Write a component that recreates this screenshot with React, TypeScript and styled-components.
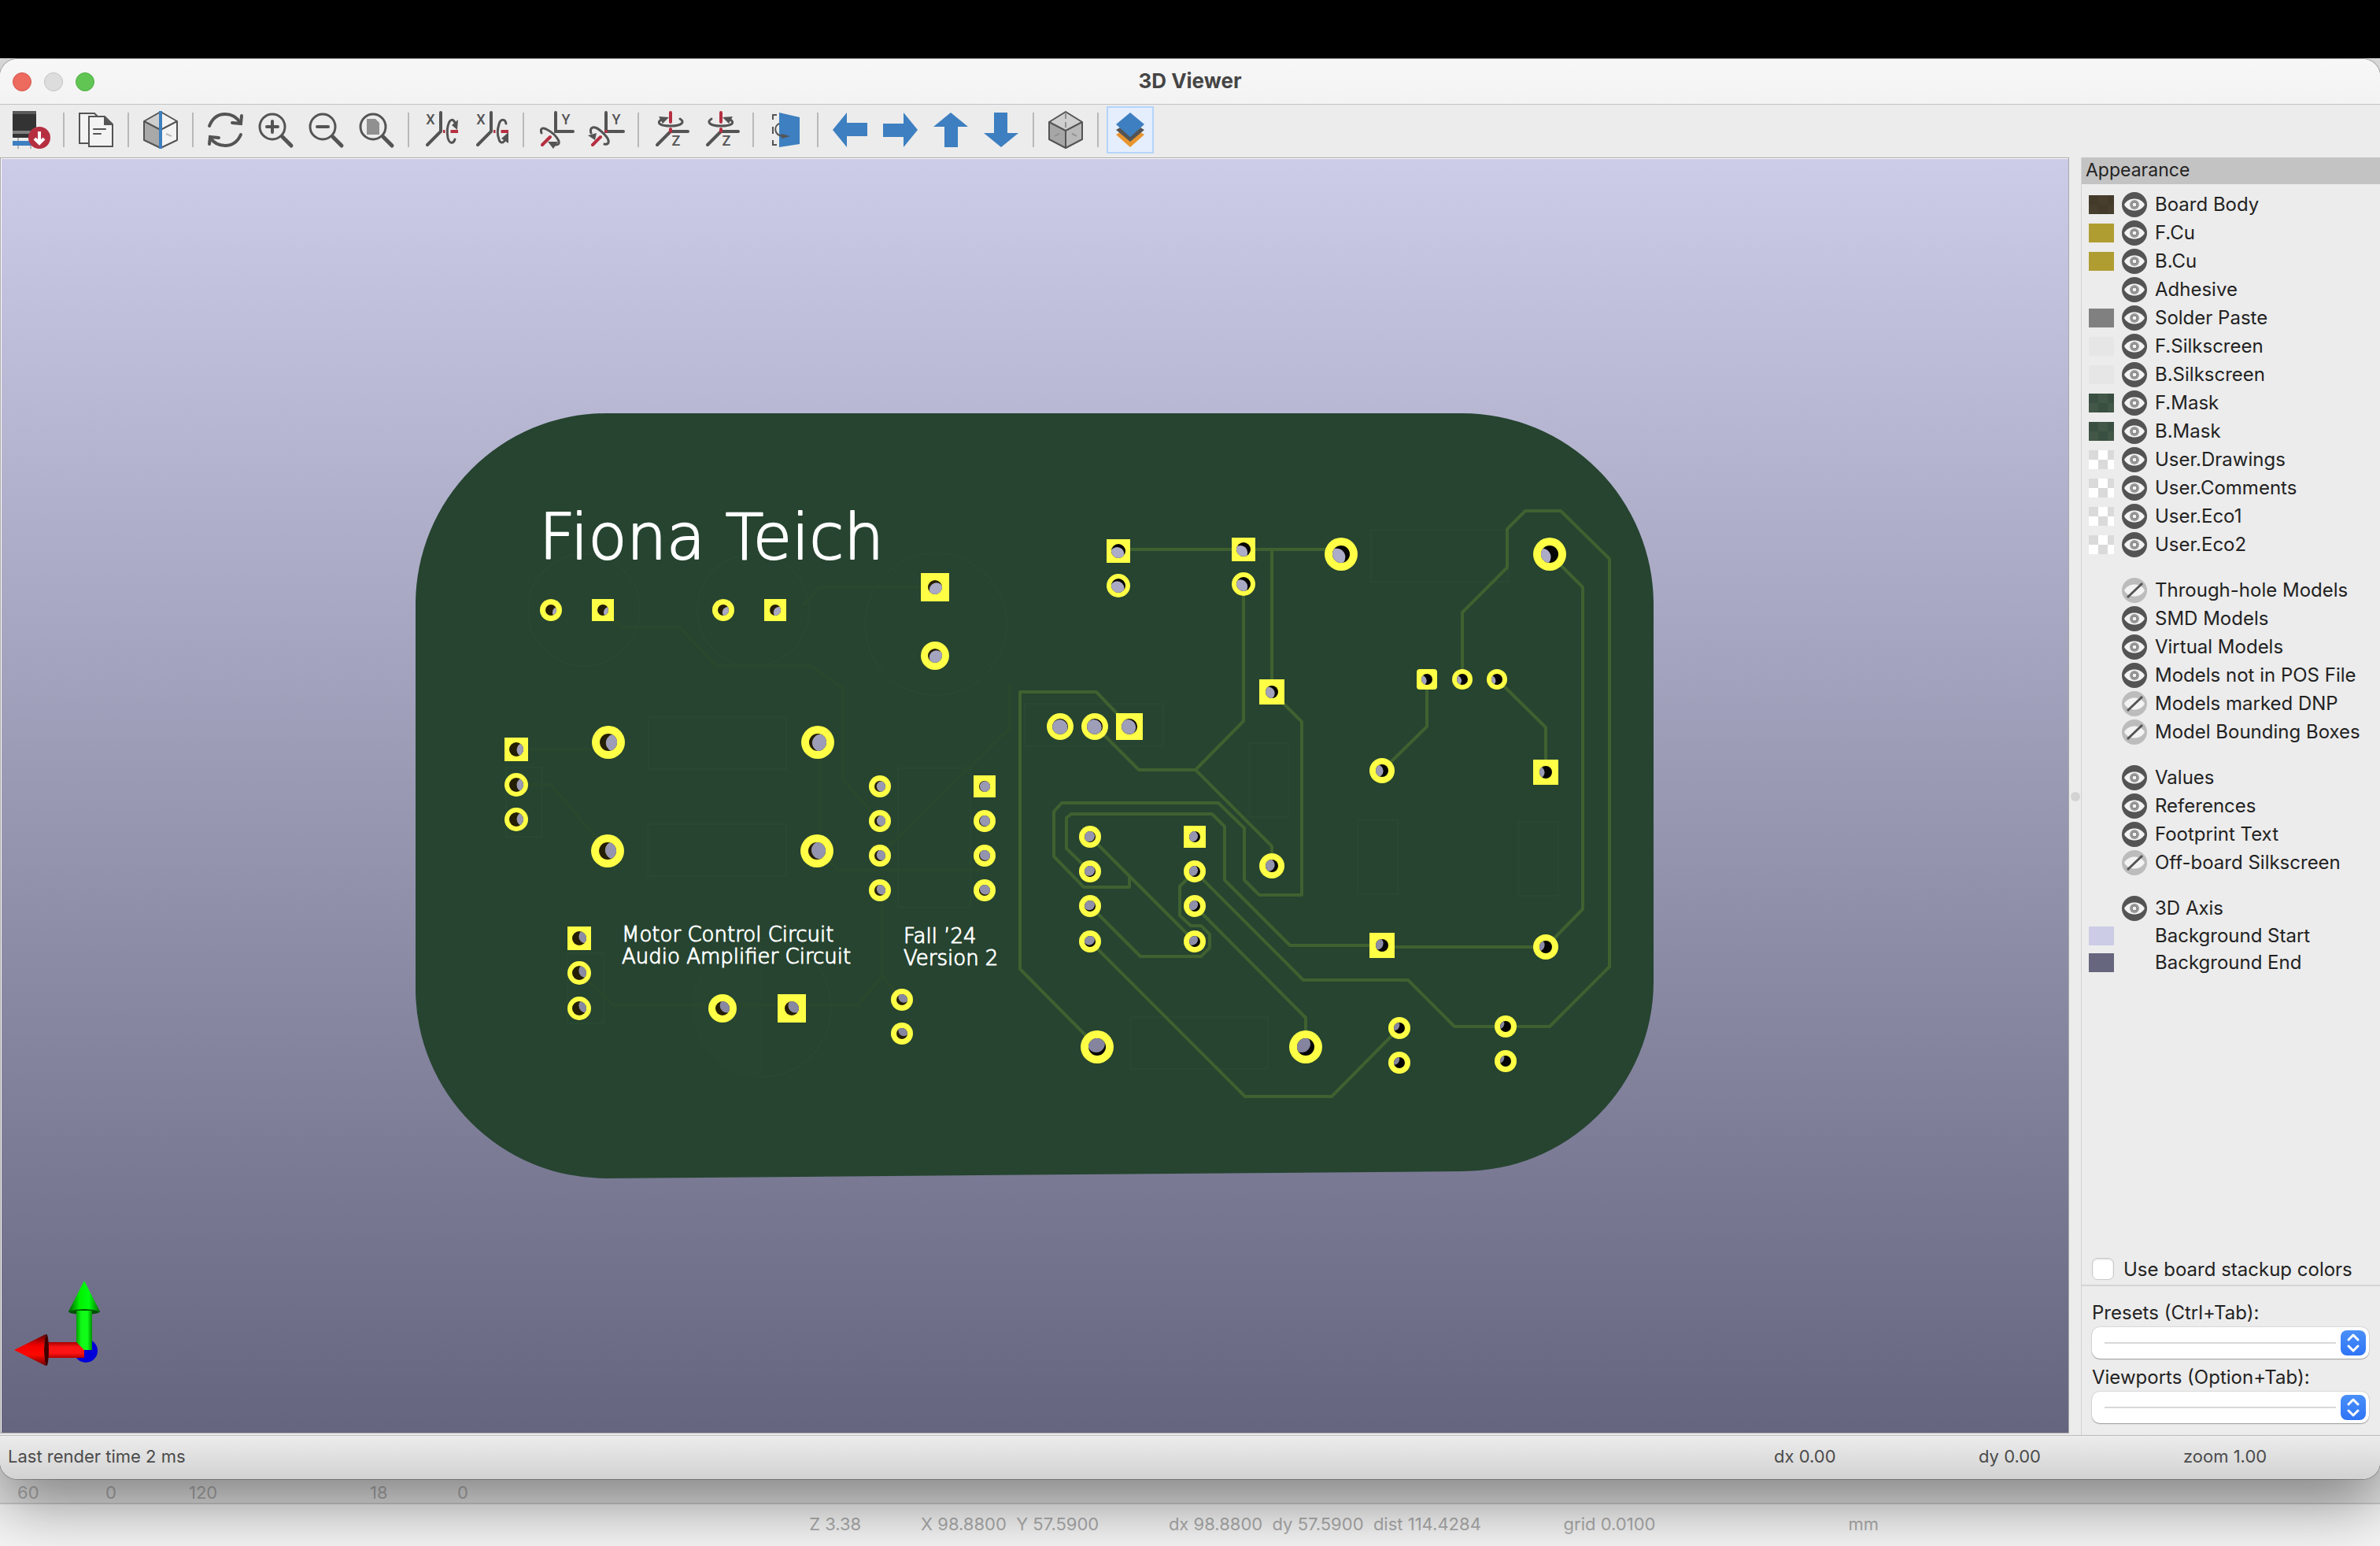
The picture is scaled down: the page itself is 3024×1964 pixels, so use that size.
import React from "react";
import styled, { createGlobalStyle, css } from "styled-components";

const GlobalStyle = createGlobalStyle`
  *, *::before, *::after { box-sizing: border-box; }
  html, body { margin: 0; padding: 0; background: #000; }
  body, button, input, select { font-family: Inter, "Liberation Sans", sans-serif; }
`;

const ink = "#545454";
const red = "#b52f41";
const blue = "#3d7fc0";

/* ---------- desktop ---------- */

const Desktop = styled.div`
  display: flex;
  flex-direction: column;
  min-height: 100vh;
  background: #e2e2e2;
  overflow: hidden;
`;

const ScreenTop = styled.div`
  height: 74px;
  background: #000;
  position: relative;
  z-index: 2;
`;

const Window = styled.main`
  flex: 1;
  display: flex;
  flex-direction: column;
  margin-top: 1px;
  position: relative;
  z-index: 1;
  border-radius: 22px;
  background: #ececec;
  overflow: hidden;
  box-shadow: 0 0 0 1px rgba(0, 0, 0, 0.24), 0 32px 80px rgba(0, 0, 0, 0.42);
`;

/* ---------- title bar ---------- */

const TitleBar = styled.header`
  display: grid;
  grid-template-columns: 1fr auto 1fr;
  align-items: center;
  height: 58px;
  padding: 0 16px;
  background: linear-gradient(#f7f7f7, #f3f3f3);
  border-bottom: 1px solid #c3c3c3;
`;

const Lights = styled.div`
  display: flex;
  gap: 16px;
`;

const Light = styled.button<{ $fill: string; $edge: string }>`
  width: 24px;
  height: 24px;
  padding: 0;
  border-radius: 50%;
  border: 1px solid ${(p) => p.$edge};
  background: ${(p) => p.$fill};
`;

const Title = styled.h1`
  margin: 0;
  padding-bottom: 2px;
  font-size: 26px;
  line-height: 32px;
  font-weight: 700;
  color: #454545;
`;

/* ---------- toolbar ---------- */

const Toolbar = styled.nav`
  display: flex;
  align-items: center;
  gap: 4px;
  height: 67px;
  padding: 0 10px 3px;
`;

const ToolButton = styled.button<{ $on?: boolean }>`
  display: flex;
  align-items: center;
  justify-content: center;
  width: 60px;
  height: 60px;
  padding: 0;
  border: 2px solid transparent;
  background: transparent;
  ${(p) =>
    p.$on &&
    css`
      border-color: #b4d4fb;
      background: #e5eefc;
    `}
`;

const Separator = styled.span`
  width: 2px;
  height: 44px;
  margin: 0 6px;
  background: #b9b9b9;
`;

const Glyph = styled.svg`
  width: 48px;
  height: 48px;
  display: block;
  overflow: visible;
`;

const Letter = styled.text`
  font-family: Roboto, sans-serif;
  font-size: 18px;
  font-weight: 500;
  fill: ${ink};
  text-anchor: middle;
`;

/* ---------- body ---------- */

const Body = styled.div`
  flex: 1;
  display: grid;
  grid-template-columns: minmax(0, 1fr) 15px 380px;
  min-height: 0;
`;

const Viewport = styled.section`
  display: flex;
  min-height: 0;
  margin-bottom: 2px;
  border: 1px solid #a8a8a8;
  background: #fff;
  padding: 1px 0 0 1px;
`;

const Scene = styled.svg`
  display: block;
  width: 100%;
  height: 100%;
  min-height: 0;
  flex: 1;
  background: linear-gradient(#cccce8, #65657f);
`;

const Sash = styled.div`
  display: flex;
  align-items: center;
  justify-content: center;
  &::after {
    content: "";
    width: 12px;
    height: 12px;
    border-radius: 50%;
    background: #d3d3d3;
  }
`;

const Sidebar = styled.aside`
  display: flex;
  flex-direction: column;
  border-left: 1px solid #d2d2d2;
  color: #222;
`;

const PanelTitle = styled.h2`
  margin: 0;
  height: 34px;
  padding-left: 5px;
  background: #c3c3c3;
  font-size: 23px;
  font-weight: 400;
  line-height: 33px;
`;

const Groups = styled.div`
  flex: 1;
  display: flex;
  flex-direction: column;
  gap: 22px;
  padding: 8px 9px;
`;

const Group = styled.div``;

const Row = styled.div<{ $plain?: boolean }>`
  display: grid;
  grid-template-columns: 32px minmax(0, 1fr);
  column-gap: 10px;
  align-items: center;
  height: ${(p) => (p.$plain ? 34 : 36)}px;
`;

const Swatch = styled.button<{ $a: string; $b: string }>`
  width: 32px;
  height: 24px;
  padding: 0;
  border: 0;
  background: conic-gradient(
      ${(p) => p.$a} 25%,
      ${(p) => p.$b} 0 50%,
      ${(p) => p.$a} 0 75%,
      ${(p) => p.$b} 0
    )
    0 0 / 24px 24px;
`;

const Toggle = styled.label`
  grid-column: 2;
  display: grid;
  grid-template-columns: 32px minmax(0, 1fr);
  column-gap: 10px;
  align-items: center;
  font-size: 24px;
  line-height: 32px;
  white-space: nowrap;
`;

const ToggleInput = styled.input`
  grid-area: 1 / 1;
  width: 32px;
  height: 32px;
  margin: 0;
  opacity: 0;
`;

const ToggleIcon = styled.svg`
  grid-area: 1 / 1;
  width: 32px;
  height: 32px;
  pointer-events: none;
`;

const ToggleText = styled.span`
  grid-column: 2;
`;

const StackupRow = styled.label`
  display: flex;
  align-items: center;
  gap: 12px;
  height: 28px;
  margin: 0 0 6px 13px;
  font-size: 24px;
  white-space: nowrap;
`;

const CheckBox = styled.input`
  appearance: none;
  width: 28px;
  height: 28px;
  margin: 0;
  border: 1px solid #c9c9c9;
  border-radius: 7px;
  background: #fff;
  box-shadow: inset 0 1px 2px rgba(0, 0, 0, 0.15);
`;

const Choosers = styled.div`
  display: flex;
  flex-direction: column;
  gap: 8px;
  padding: 18px 14px 15px 13px;
  border-top: 2px solid #d3d3d3;
`;

const Chooser = styled.div`
  display: flex;
  flex-direction: column;
  gap: 2px;
`;

const ChooserLabel = styled.label`
  font-size: 24px;
  line-height: 32px;
`;

const SelectBox = styled.div`
  display: grid;
  grid-template-columns: minmax(0, 1fr) 32px;
  align-items: center;
  column-gap: 6px;
  height: 40px;
  padding: 0 4px 0 16px;
  border-radius: 10px;
  background: #fff;
  box-shadow: 0 0 1px 1px rgba(0, 0, 0, 0.08), 0 1px 1px rgba(0, 0, 0, 0.28);
`;

const Select = styled.select`
  grid-area: 1 / 1 / 2 / 3;
  appearance: none;
  width: 100%;
  height: 40px;
  border: 0;
  background: transparent;
`;

const SelectRule = styled.span`
  grid-area: 1 / 1;
  height: 2px;
  background: #d8d8d8;
  pointer-events: none;
`;

const Stepper = styled.svg`
  grid-area: 1 / 2;
  width: 32px;
  height: 32px;
  border-radius: 8px;
  background: linear-gradient(#4a90f8, #2f74f6);
  pointer-events: none;
`;

/* ---------- status bars ---------- */

const StatusBar = styled.footer`
  display: grid;
  grid-template-columns: 1fr 260px 260px 250px;
  align-items: center;
  height: 56px;
  padding: 0 0 3px 10px;
  border-top: 1px solid #bcbcbc;
  background: linear-gradient(#ececec, #d2d2d2);
  font-size: 22px;
  color: #4b4b4b;
`;

const BackWindow = styled.div`
  height: 86px;
  font-size: 22px;
  white-space: pre;
`;

const BackCounts = styled.div`
  display: grid;
  grid-template-columns: 112px 106px 230px 111px 1fr;
  align-items: center;
  height: 32px;
  padding: 4px 0 0 22px;
  border-bottom: 2px solid #cbcbcb;
  background: #e2e2e2;
  color: #acacac;
`;

const BackReadout = styled.div`
  display: grid;
  grid-template-columns: 142fr 315fr 502fr 362fr 676fr;
  align-items: center;
  height: 54px;
  padding: 0 0 4px 34%;
  background: #f5f5f5;
  color: #ababab;
`;

/* ---------- toolbar drawings ---------- */

const line = { fill: "none", stroke: ink, strokeWidth: 4, strokeLinecap: "round" as const };
const loop = { fill: "none", stroke: ink, strokeWidth: 3, strokeLinecap: "round" as const };

const RaytraceIcon = () => (
  <Glyph viewBox="0 0 48 48">
    <rect width="30" height="34" rx="1" fill="#333" />
    <rect width="30" height="4" rx="1" fill="#5a5a5a" />
    <rect y="25" width="30" height="4" fill="#808080" />
    <path d="M7 34v14M23 34v14" stroke="#b5b5b5" strokeWidth="2" />
    <rect y="38" width="30" height="6" fill={blue} />
    <circle cx="34" cy="34" r="14" fill={red} />
    <path d="M34 26v14M28 35l6 6 6-6" fill="none" stroke="#fff" strokeWidth="4" />
  </Glyph>
);

const CopyIcon = () => (
  <Glyph viewBox="0 0 48 48" fill="#f3f3f3" stroke={ink} strokeWidth="2">
    <path d="M3 3h19l4 4v34H3z" />
    <path d="M15 7h20l10 10v28H15z" />
    <path d="M34 7l11 11H34z" fill={ink} stroke="none" />
    <path d="M21 23h15M21 29h9" strokeLinecap="round" />
  </Glyph>
);

const CutCubeIcon = () => (
  <Glyph viewBox="0 0 48 48" strokeLinejoin="round">
    <path d="M24 1L3 13l21 11z" fill="#cecece" />
    <path d="M3 13v24l21 10V24z" fill="#a9a9a9" />
    <path d="M24 1l21 12v24L24 47z" fill="#f3f3f3" />
    <path d="M24 1L3 13v24l21 10 21-10V13zM3 13l21 11 21-11" fill="none" stroke={ink} strokeWidth="2" />
    <path d="M31 29l7 3" stroke="#bbb" strokeWidth="2" />
    <path d="M24 0v48" stroke={blue} strokeWidth="4" />
  </Glyph>
);

const RefreshIcon = () => (
  <Glyph viewBox="0 0 48 48" {...line}>
    <path d="M4 19C8 9 15 4 24 4c8 0 15 4 19 11" />
    <path d="M45 6l-1 10-11-1" />
    <path d="M44 30c-4 9-11 14-20 14-8 0-14-3-19-10" />
    <path d="M4 42l1-9 11 1" />
  </Glyph>
);

const ZoomIcon = ({ kind }: { kind: "in" | "out" | "fit" }) => (
  <Glyph viewBox="0 0 48 48" {...line}>
    <circle cx="20" cy="20" r="16" strokeWidth="3" />
    <path d="M33 33l11 11" strokeWidth="5" />
    {kind === "in" && <path d="M13 20h14M20 13v14" />}
    {kind === "out" && <path d="M13 20h14" />}
    {kind === "fit" && <path d="M12 10h11l5 5v15H12z" fill="#909090" stroke="none" />}
  </Glyph>
);

const RotateXIcon = ({ back }: { back?: boolean }) => (
  <Glyph viewBox="0 0 48 48" {...line}>
    <Letter x="11" y="17" stroke="none">X</Letter>
    <path d="M27 26h19" stroke={red} strokeLinecap="butt" />
    <path d="M24 2v24L7 43" />
    <path d="M33 20v12" stroke="#ececec" strokeWidth="7" />
    {back ? (
      <>
        <path {...loop} d="M43 16c-1-6-7-7-9 1-2 6-2 14 0 19 1 5 5 5 7 2" />
        <path d="M46 27v14l-9-6z" fill={ink} stroke="none" />
      </>
    ) : (
      <>
        <path {...loop} d="M42 36c-2 6-7 6-9-2-1-6-1-13 1-18 2-6 6-6 8-1" />
        <path d="M46 11l-8 7 7 6z" fill={ink} stroke="none" />
      </>
    )}
  </Glyph>
);

const RotateYIcon = ({ back }: { back?: boolean }) => (
  <Glyph viewBox="0 0 48 48" {...line}>
    <Letter x="37" y="17" stroke="none">Y</Letter>
    <path d="M24 2v24h22" />
    <path d="M17 33L7 43" stroke={red} />
    {back ? (
      <>
        <circle cx="24" cy="26" r="2" fill={red} stroke="none" />
        <path {...loop} d="M22 42c6 1 7-4 2-10-6-7-13-12-17-11-3 1-3 4-2 7" />
        <path d="M1 31l11-3-2 9z" fill={ink} stroke="none" />
      </>
    ) : (
      <>
        <path {...loop} d="M6 28c-2-6 1-7 6-5 6 3 13 9 16 15 1 4-1 5-4 5" />
        <path d="M14 39h13l-6 9z" fill={ink} stroke="none" />
      </>
    )}
  </Glyph>
);

const RotateZIcon = ({ back }: { back?: boolean }) => (
  <Glyph viewBox="0 0 48 48" {...line}>
    <Letter x="31" y="44" stroke="none">Z</Letter>
    <path d="M24 26h22M24 26L7 43" />
    <path d="M24 2v12M24 23v3" stroke={red} />
    <g transform={back ? "translate(48 0) scale(-1 1)" : undefined}>
      <path {...loop} d="M12 11c-6 4-2 8 12 8s19-5 12-9" />
      <path d="M9 7l13 1-8 8z" fill={ink} stroke="none" />
    </g>
  </Glyph>
);

const FlipIcon = () => (
  <Glyph viewBox="0 0 48 48" fill="none">
    <path d="M13 5H8v6M8 20v9M8 37v6h5" stroke={ink} strokeWidth="2" />
    <path d="M16 2l26 6v34l-26 4z" fill={blue} />
    <path d="M16 16c-7 3-7 15 5 16" stroke={ink} strokeWidth="2" />
    <path d="M19 29l11 3-11 3z" fill={ink} />
  </Glyph>
);

const ArrowIcon = ({ turn }: { turn: number }) => (
  <Glyph viewBox="0 0 48 48">
    <path d="M2 24L20 2v13h26v17H20v14z" fill={blue} transform={`rotate(${turn} 24 24)`} />
  </Glyph>
);

const CubeIcon = () => (
  <Glyph viewBox="0 0 48 48" strokeLinejoin="round">
    <path d="M24 1L3 14l21 11 21-11z" fill="#cfcfcf" />
    <path d="M3 14v22l21 11V25z" fill="#a6a6a6" />
    <path d="M45 14v22L24 47V25z" fill="#b9b9b9" />
    <path d="M24 3v18M10 32l7-4M38 32l-7-4" stroke="#909090" strokeWidth="2" strokeDasharray="7 4" />
    <path d="M24 1L3 14v22l21 11 21-11V14zM3 14l21 11 21-11M24 25v22" fill="none" stroke={ink} strokeWidth="2" />
  </Glyph>
);

const LayersIcon = () => (
  <Glyph viewBox="0 0 48 48">
    <path d="M6 30l5-3 13 11 13-11 5 3-18 16z" fill="#e8952f" />
    <path d="M6 24l5-3 13 11 13-11 5 3-18 15z" fill={ink} />
    <path d="M24 2l18 15-18 16L6 17z" fill={blue} />
  </Glyph>
);

type Tool = { name: string; icon: React.ReactNode; on?: boolean };

const toolGroups: Tool[][] = [
  [{ name: "Render with raytracing", icon: <RaytraceIcon /> }],
  [{ name: "Copy image", icon: <CopyIcon /> }],
  [{ name: "Toggle projection cut", icon: <CutCubeIcon /> }],
  [
    { name: "Redraw", icon: <RefreshIcon /> },
    { name: "Zoom in", icon: <ZoomIcon kind="in" /> },
    { name: "Zoom out", icon: <ZoomIcon kind="out" /> },
    { name: "Zoom to fit", icon: <ZoomIcon kind="fit" /> },
  ],
  [
    { name: "Rotate X clockwise", icon: <RotateXIcon /> },
    { name: "Rotate X counterclockwise", icon: <RotateXIcon back /> },
  ],
  [
    { name: "Rotate Y clockwise", icon: <RotateYIcon /> },
    { name: "Rotate Y counterclockwise", icon: <RotateYIcon back /> },
  ],
  [
    { name: "Rotate Z clockwise", icon: <RotateZIcon /> },
    { name: "Rotate Z counterclockwise", icon: <RotateZIcon back /> },
  ],
  [{ name: "Flip board", icon: <FlipIcon /> }],
  [
    { name: "Pan left", icon: <ArrowIcon turn={0} /> },
    { name: "Pan right", icon: <ArrowIcon turn={180} /> },
    { name: "Pan up", icon: <ArrowIcon turn={90} /> },
    { name: "Pan down", icon: <ArrowIcon turn={270} /> },
  ],
  [{ name: "Orthographic projection", icon: <CubeIcon /> }],
  [{ name: "Show appearance manager", icon: <LayersIcon />, on: true }],
];

/* ---------- board ---------- */

type Pad = [x: number, y: number, r: number, hole: number, shape?: "sq" | "rr"];

const pads: Pad[] = [
  [700, 775, 14, 7], [766, 775, 14, 7, "sq"], [919, 775, 14, 7], [985, 775, 14, 7, "sq"],
  [1188, 746, 18, 9, "sq"], [1188, 833, 18, 9],
  [773, 943, 21, 11], [1039, 943, 21, 11], [772, 1081, 21, 11], [1038, 1081, 21, 11],
  [656, 952, 15, 9, "sq"], [656, 997, 15, 9], [656, 1041, 15, 9],
  [1118, 999, 14, 7], [1118, 1043, 14, 7], [1118, 1087, 14, 7], [1118, 1131, 14, 7],
  [1251, 999, 14, 7, "sq"], [1251, 1043, 14, 7], [1251, 1087, 14, 7], [1251, 1131, 14, 7],
  [736, 1192, 15, 9, "sq"], [736, 1236, 15, 9], [736, 1281, 15, 9],
  [918, 1281, 18, 9], [1006, 1281, 18, 9, "sq"],
  [1146, 1270, 14, 7], [1146, 1313, 14, 7],
  [1421, 700, 15, 9, "sq"], [1421, 744, 15, 9], [1580, 698, 15, 9, "sq"], [1580, 742, 15, 9],
  [1704, 704, 21, 11], [1969, 704, 21, 11],
  [1813, 863, 13, 7, "rr"], [1858, 863, 13, 7], [1902, 863, 13, 7],
  [1616, 879, 16, 8, "sq"], [1616, 1100, 16, 8],
  [1347, 923, 17, 10], [1391, 923, 17, 10], [1435, 923, 17, 10, "sq"],
  [1756, 979, 16, 8], [1964, 981, 16, 8, "sq"], [1756, 1201, 16, 8, "sq"], [1964, 1203, 16, 8],
  [1385, 1063, 14, 7], [1385, 1107, 14, 7], [1385, 1151, 14, 7], [1385, 1196, 14, 7],
  [1518, 1063, 14, 7, "sq"], [1518, 1107, 14, 7], [1518, 1151, 14, 7], [1518, 1196, 14, 7],
  [1394, 1330, 21, 11], [1659, 1330, 21, 11],
  [1778, 1306, 14, 7], [1778, 1350, 14, 7], [1913, 1304, 14, 7], [1913, 1348, 14, 7],
];

const traces = [
  "M1421 698H1704", "M1616 698V879",
  "M1580 742V916L1519 978H1447L1391 922", "M1519 978L1616 1075V1100",
  "M1616 879L1654 917V1137H1600L1581 1118V1052L1548 1020H1349L1339 1031V1088L1377 1127H1435V1115",
  "M1385 1063L1518 1196",
  "M1385 1107L1355 1078V1039L1361 1034H1540L1556 1050V1118L1639 1201H1756",
  "M1756 1203H1964L2011 1155V746L1969 704",
  "M1518 1107L1656 1245H1789L1848 1304H1969L2045 1228V710L1983 649H1938L1915 672V721L1858 778V863",
  "M1518 1107L1499 1126V1163L1513 1176H1526L1537 1187V1204L1526 1215H1449L1385 1151",
  "M1518 1151L1659 1293V1330",
  "M1385 1196L1582 1393H1692L1778 1306",
  "M1394 1330L1296 1231V879H1393L1435 923",
  "M1813 863V923L1756 979", "M1902 863L1964 924V981",
];

const buriedTraces = [
  "M766 775L790 797H864L910 846H1030L1071 874V990L1118 1043",
  "M656 952H773", "M656 997H700L772 1081", "M1042 943V1081L1065 1105H1251",
  "M1283 870V925L1130 1075", "M736 1236L780 1277H1090L1121 1240V1131", "M1121 1240L1146 1270",
  "M1188 746H1040L1020 770",
];

const Silk = styled.text<{ $size: number; $pen: number }>`
  font-family: "DejaVu Sans Light", "DejaVu Sans", sans-serif;
  font-size: ${(p) => p.$size}px;
  font-weight: 200;
  fill: #fff;
  stroke: #fff;
  stroke-width: ${(p) => p.$pen}px;
  stroke-linejoin: round;
`;

const PadShape = ({ pad, id }: { pad: Pad; id: string }) => {
  const [x, y, r, hole, shape] = pad;
  const dx = (1314 - x) * 0.0145;
  const dy = (1010 - y) * 0.0125;
  return (
    <g>
      {shape ? (
        <rect x={x - r} y={y - r} width={r * 2} height={r * 2} rx={shape === "rr" ? 4 : 0} fill="#ffff46" />
      ) : (
        <circle cx={x} cy={y} r={r} fill="#ffff46" />
      )}
      <clipPath id={id}>
        <circle cx={x} cy={y} r={hole} />
      </clipPath>
      <circle cx={x} cy={y} r={hole} fill={x < 1314 ? "#241e04" : "#060502"} />
      <circle cx={x + dx} cy={y + dy} r={hole} fill="url(#sky)" clipPath={`url(#${id})`} />
    </g>
  );
};

const Board = () => (
  <Scene viewBox="2 202 2626 1618" preserveAspectRatio="xMidYMid meet" role="img" aria-label="Circuit board">
    <defs>
      <linearGradient id="sky" gradientUnits="userSpaceOnUse" x1="0" y1="202" x2="0" y2="1820">
        <stop offset="0" stopColor="#cccce8" />
        <stop offset="1" stopColor="#65657f" />
      </linearGradient>
      <linearGradient id="greenCone" x1="0" x2="1">
        <stop offset="0" stopColor="#005c00" />
        <stop offset="0.35" stopColor="#00f000" />
        <stop offset="0.65" stopColor="#00ff10" />
        <stop offset="1" stopColor="#006c00" />
      </linearGradient>
      <linearGradient id="redCone" x1="0" x2="0" y1="0" y2="1">
        <stop offset="0" stopColor="#5c0000" />
        <stop offset="0.35" stopColor="#f00000" />
        <stop offset="0.65" stopColor="#ff0800" />
        <stop offset="1" stopColor="#6c0000" />
      </linearGradient>
      <linearGradient id="redBar" x1="0" x2="0" y1="0" y2="1">
        <stop offset="0" stopColor="#a80000" />
        <stop offset="0.3" stopColor="#f81414" />
        <stop offset="0.7" stopColor="#ff1414" />
        <stop offset="1" stopColor="#b00000" />
      </linearGradient>
      <linearGradient id="greenBar" x1="0" x2="1">
        <stop offset="0" stopColor="#009c00" />
        <stop offset="0.3" stopColor="#10f818" />
        <stop offset="0.7" stopColor="#10ff18" />
        <stop offset="1" stopColor="#008c00" />
      </linearGradient>
    </defs>

    <path
      d="M770 525H1858A243 243 0 0 1 2101 768V1247A243 241 0 0 1 1858 1488L770 1497A242 241 0 0 1 528 1256V768A242 243 0 0 1 770 525Z"
      fill="#264430"
    />

    <g fill="none" stroke="#294832" strokeWidth="2">
      <circle cx="742" cy="775" r="71" />
      <circle cx="957" cy="775" r="71" />
      <circle cx="1189" cy="793" r="90" />
      <circle cx="968" cy="1280" r="88" />
      <path d="M968 1192A88 88 0 0 0 968 1368Z" fill="#274531" stroke="none" />
      <rect x="824" y="911" width="175" height="66" />
      <rect x="823" y="1047" width="176" height="66" />
      <rect x="1141" y="976" width="92" height="177" />
      <rect x="643" y="975" width="46" height="88" />
      <rect x="721" y="1211" width="46" height="89" />
      <rect x="1437" y="1292" width="174" height="66" />
      <rect x="1725" y="1042" width="51" height="94" />
      <rect x="1930" y="1044" width="50" height="94" />
      <rect x="1587" y="944" width="50" height="94" />
      <rect x="1742" y="673" width="174" height="66" />
      <rect x="1302" y="894" width="176" height="54" />
    </g>
    <g fill="none" stroke="#2a472e" strokeWidth="4">
      {buriedTraces.map((d) => (
        <path key={d} d={d} />
      ))}
    </g>
    <g fill="none" stroke="#3f6130" strokeWidth="4" strokeLinejoin="round">
      {traces.map((d) => (
        <path key={d} d={d} />
      ))}
    </g>
    {pads.map((pad, i) => (
      <PadShape key={i} pad={pad} id={`hole${i}`} />
    ))}

    <Silk x="685" y="710" $size={80} $pen={2}>Fiona Teich</Silk>
    <Silk x="790" y="1196" $size={26} $pen={1}>Motor Control Circuit</Silk>
    <Silk x="790" y="1224" $size={26} $pen={1}>Audio Amplifier Circuit</Silk>
    <Silk x="1148" y="1198" $size={26} $pen={1}>Fall ’24</Silk>
    <Silk x="1148" y="1226" $size={26} $pen={1}>Version 2</Silk>

    <circle cx="109" cy="1716" r="15" fill="#0000d8" />
    <rect x="57" y="1705" width="50" height="20" fill="url(#redBar)" />
    <ellipse cx="59" cy="1715" rx="3" ry="20" fill="#400000" />
    <path d="M18 1715L58 1695Q54 1715 58 1735Z" fill="url(#redCone)" />
    <path d="M97 1664H117V1715H107L97 1705Z" fill="url(#greenBar)" />
    <ellipse cx="107" cy="1666" rx="20" ry="4" fill="#005000" />
    <path d="M107 1627L127 1666Q107 1660 87 1666Z" fill="url(#greenCone)" />
    <rect x="97" y="1665" width="20" height="8" fill="url(#greenBar)" />
  </Scene>
);

/* ---------- appearance panel ---------- */

const EyeIcon = ({ on }: { on: boolean }) => (
  <ToggleIcon viewBox="0 0 32 32">
    <circle cx="16" cy="16" r="16" fill={on ? ink : "#bcbcbc"} />
    <path d="M3 16C8 6 24 6 29 16 24 26 8 26 3 16Z" fill="#f3f3f3" />
    {on ? (
      <>
        <circle cx="16" cy="16" r="6" fill="#999" />
        <circle cx="16" cy="16" r="3" fill="#f3f3f3" stroke="#777" strokeWidth="1" />
      </>
    ) : (
      <path d="M7 25L26 7" stroke={ink} strokeWidth="3" />
    )}
  </ToggleIcon>
);

type Layer = { label: string; color?: [string, string]; on?: boolean; plain?: boolean };

const gold: [string, string] = ["#b09d31", "#b09d31"];
const silk: [string, string] = ["#e6e6e6", "#e6e6e6"];
const mask: [string, string] = ["#425747", "#394f41"];
const clear: [string, string] = ["#ffffff", "#dadada"];

const layerGroups: Layer[][] = [
  [
    { label: "Board Body", color: ["#473e2d", "#433a2a"], on: true },
    { label: "F.Cu", color: gold, on: true },
    { label: "B.Cu", color: gold, on: true },
    { label: "Adhesive", on: true },
    { label: "Solder Paste", color: ["#808080", "#808080"], on: true },
    { label: "F.Silkscreen", color: silk, on: true },
    { label: "B.Silkscreen", color: silk, on: true },
    { label: "F.Mask", color: mask, on: true },
    { label: "B.Mask", color: mask, on: true },
    { label: "User.Drawings", color: clear, on: true },
    { label: "User.Comments", color: clear, on: true },
    { label: "User.Eco1", color: clear, on: true },
    { label: "User.Eco2", color: clear, on: true },
  ],
  [
    { label: "Through-hole Models", on: false },
    { label: "SMD Models", on: true },
    { label: "Virtual Models", on: true },
    { label: "Models not in POS File", on: true },
    { label: "Models marked DNP", on: false },
    { label: "Model Bounding Boxes", on: false },
  ],
  [
    { label: "Values", on: true },
    { label: "References", on: true },
    { label: "Footprint Text", on: true },
    { label: "Off-board Silkscreen", on: false },
  ],
  [
    { label: "3D Axis", on: true },
    { label: "Background Start", color: ["#cccce6", "#cccce6"], plain: true },
    { label: "Background End", color: ["#66667f", "#66667f"], plain: true },
  ],
];

const LayerRow = ({ layer }: { layer: Layer }) => {
  const [on, setOn] = React.useState(!!layer.on);
  return (
    <Row $plain={layer.plain}>
      {layer.color && (
        <Swatch type="button" aria-label={`${layer.label} color`} $a={layer.color[0]} $b={layer.color[1]} />
      )}
      {layer.plain ? (
        <Toggle as="div">
          <ToggleText>{layer.label}</ToggleText>
        </Toggle>
      ) : (
        <Toggle>
          <ToggleInput type="checkbox" checked={on} onChange={(e) => setOn(e.target.checked)} />
          <EyeIcon on={on} />
          <ToggleText>{layer.label}</ToggleText>
        </Toggle>
      )}
    </Row>
  );
};

const PresetChooser = ({ id, label }: { id: string; label: string }) => (
  <Chooser>
    <ChooserLabel htmlFor={id}>{label}</ChooserLabel>
    <SelectBox>
      <Select id={id} defaultValue="">
        <option value="" />
      </Select>
      <SelectRule />
      <Stepper viewBox="0 0 32 32" fill="none" stroke="#fff" strokeWidth="3" strokeLinecap="round" strokeLinejoin="round">
        <path d="M10 12l6-6 6 6M10 20l6 6 6-6" />
      </Stepper>
    </SelectBox>
  </Chooser>
);

export default function App() {
  return (
    <Desktop>
      <GlobalStyle />
      <ScreenTop />
      <Window>
        <TitleBar>
          <Lights>
            <Light type="button" aria-label="Close" $fill="#ed6a5f" $edge="#d5554a" />
            <Light type="button" aria-label="Minimize" $fill="#dddddd" $edge="#c2c2c2" />
            <Light type="button" aria-label="Full screen" $fill="#61c554" $edge="#4fae43" />
          </Lights>
          <Title>3D Viewer</Title>
        </TitleBar>
        <Toolbar aria-label="Viewer tools">
          {toolGroups.map((group, i) => (
            <React.Fragment key={i}>
              {i > 0 && <Separator />}
              {group.map((tool) => (
                <ToolButton key={tool.name} type="button" aria-label={tool.name} $on={tool.on}>
                  {tool.icon}
                </ToolButton>
              ))}
            </React.Fragment>
          ))}
        </Toolbar>
        <Body>
          <Viewport>
            <Board />
          </Viewport>
          <Sash />
          <Sidebar>
            <PanelTitle>Appearance</PanelTitle>
            <Groups>
              {layerGroups.map((group, i) => (
                <Group key={i}>
                  {group.map((layer) => (
                    <LayerRow key={layer.label} layer={layer} />
                  ))}
                </Group>
              ))}
            </Groups>
            <StackupRow>
              <CheckBox type="checkbox" />
              Use board stackup colors
            </StackupRow>
            <Choosers>
              <PresetChooser id="presets" label="Presets (Ctrl+Tab):" />
              <PresetChooser id="viewports" label="Viewports (Option+Tab):" />
            </Choosers>
          </Sidebar>
        </Body>
        <StatusBar>
          <span>Last render time 2 ms</span>
          <span>dx 0.00</span>
          <span>dy 0.00</span>
          <span>zoom 1.00</span>
        </StatusBar>
      </Window>
      <BackWindow>
        <BackCounts>
          <span>60</span>
          <span>0</span>
          <span>120</span>
          <span>18</span>
          <span>0</span>
        </BackCounts>
        <BackReadout>
          <span>Z 3.38</span>
          <span>X 98.8800  Y 57.5900</span>
          <span>dx 98.8800  dy 57.5900  dist 114.4284</span>
          <span>grid 0.0100</span>
          <span>mm</span>
        </BackReadout>
      </BackWindow>
    </Desktop>
  );
}
